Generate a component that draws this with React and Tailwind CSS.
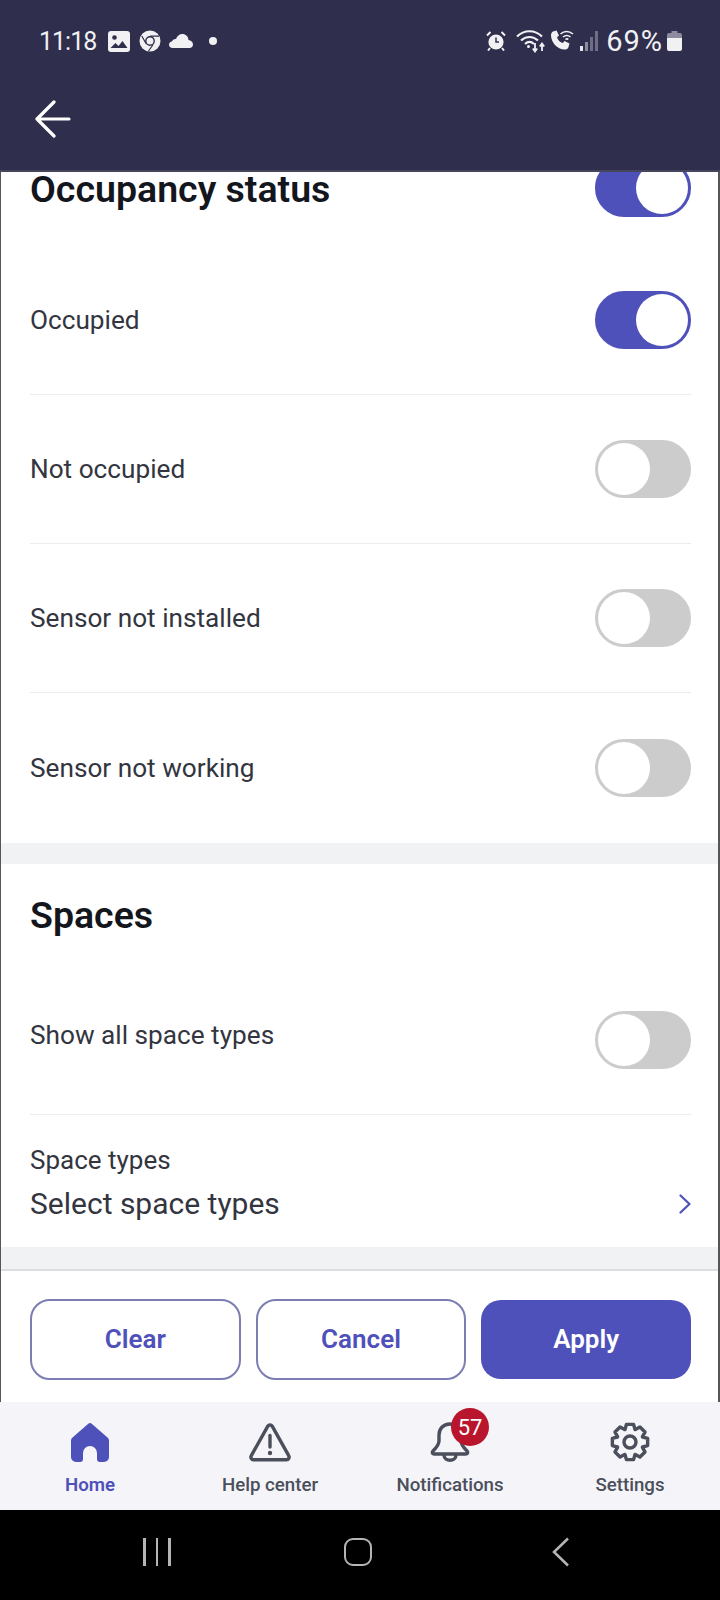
import { useMemo } from "react";

const font = { fontFamily: "Roboto, sans-serif" };

function Toggle({ on }) {
  return (
    <div
      className={`flex h-[58px] w-[96px] shrink-0 items-center rounded-full border-[3px] ${
        on
          ? "justify-end border-[#4f51bb] bg-[#4f51bb]"
          : "justify-start border-[#cccccc] bg-[#cccccc]"
      }`}
    >
      <div className="h-[52px] w-[52px] rounded-full bg-white"></div>
    </div>
  );
}

function ToggleRow({ label, on, last }) {
  return (
    <div
      className={`flex items-center justify-between ${
        last ? "h-[150px]" : "h-[149px] border-b border-[#ececee]"
      }`}
    >
      <span className="text-[26.2px] leading-none text-[#33353f]">{label}</span>
      <Toggle on={on} />
    </div>
  );
}

function StatusBar() {
  return (
    <div className="flex h-[82px] items-center pl-[39px] pr-[38px] text-[#f1f1f4]">
      <span className="text-[25px] leading-none tracking-[-1px]">11:18</span>
      <svg width="22" height="21" viewBox="0 0 22 21" className="ml-[12px]">
        <rect width="22" height="21" rx="3" fill="#f1f1f4" />
        <circle cx="6.500" cy="6.500" r="2.300" fill="#2f2e4c" />
        <path d="M2.500 17l5-5 3 3 4-5 5 7z" fill="#2f2e4c" />
      </svg>
      <svg width="22" height="22" viewBox="0 0 22 22" className="ml-[9px]">
        <circle cx="11" cy="11" r="10.500" fill="#f1f1f4" />
        <circle cx="11" cy="11" r="4.200" fill="#f1f1f4" stroke="#2f2e4c" strokeWidth="1.400" />
        <path d="M11 6.200h9M7 13.500L2.800 6M13.800 15L9.500 21" stroke="#2f2e4c" strokeWidth="1.200" />
      </svg>
      <svg width="24" height="14" viewBox="0 0 24 14" className="ml-[8px]">
        <path
          d="M3.500 14C1.500 14 0 12.600 0 10.800c0-1.700 1.300-3 3-3.200C3.600 5.600 5.300 4.600 7 5c1-3 3.300-5 6.300-5 3.400 0 6 2.500 6.200 6 2.500.3 4.500 2.200 4.500 4.500 0 2-1.500 3.500-3.500 3.500z"
          fill="#f1f1f4"
        />
      </svg>
      <div className="ml-[16px] h-[8px] w-[8px] rounded-full bg-[#f1f1f4]"></div>
      <div className="flex-1"></div>
      <svg width="20" height="20" viewBox="0 0 20 20">
        <circle cx="10" cy="11" r="7.600" fill="#f1f1f4" />
        <path d="M10 6.500V11h3" stroke="#2f2e4c" strokeWidth="1.500" fill="none" />
        <path d="M1 4.500L4.500 1M19 4.500L15.500 1M4 17l-2 2.500M16 17l2 2.500" stroke="#f1f1f4" strokeWidth="2" />
      </svg>
      <svg width="30" height="24" viewBox="0 0 30 24" className="ml-[10px]">
        <path d="M1 7.500C8 .5 19 .5 26 7.500" stroke="#f1f1f4" strokeWidth="2.200" fill="none" />
        <path d="M5 11.500C10 6.800 17 6.800 22 11.500" stroke="#f1f1f4" strokeWidth="2.200" fill="none" />
        <path d="M9 15c3-2.700 6-2.700 9 0" stroke="#f1f1f4" strokeWidth="2.200" fill="none" />
        <circle cx="12.500" cy="17.500" r="1.500" fill="#f1f1f4" />
        <path d="M19 14v8M16.800 19.500l2.200 3 2.200-3M26 22v-7M23.800 17.500l2.200-3 2.200 3" stroke="#f1f1f4" strokeWidth="1.800" fill="none" />
      </svg>
      <svg width="23" height="22" viewBox="0 0 23 22" className="ml-[5px]">
        <path
          d="M2 1.500l3.500-1 2.500 5-2 1.700c.8 2.800 3 5 5.800 5.800l1.700-2 5 2.500-1 3.500c-.4 1.500-1.500 2.500-3 2.500C6.500 20 0 12.500 0 5c0-1.500.8-3 2-3.500z"
          fill="#f1f1f4"
        />
        <path d="M9.500 4C13 .8 18 .8 22 4M12 7c2.400-2 5-2 7.500 0M14.500 9.500c1-.8 1.800-.8 2.800 0" stroke="#f1f1f4" strokeWidth="1.600" fill="none" />
      </svg>
      <div className="ml-[6px] flex h-[20px] items-end gap-[2px]">
        <div className="h-[5px] w-[3px] bg-[#e6e6ea]"></div>
        <div className="h-[9px] w-[3px] bg-[#8d8c9e]"></div>
        <div className="h-[14px] w-[3px] bg-[#6f6e84]"></div>
        <div className="h-[20px] w-[3px] bg-[#6f6e84]"></div>
      </div>
      <span className="ml-[8px] text-[29px] leading-none tracking-[1px]">69%</span>
      <svg width="15" height="20" viewBox="0 0 15 20" className="ml-[4px]">
        <path d="M4.500 0h6v2H13a2 2 0 012 2v3H0V4a2 2 0 012-2h2.500z" fill="#8d8c9e" />
        <path d="M0 7h15v11a2 2 0 01-2 2H2a2 2 0 01-2-2z" fill="#f1f1f4" />
      </svg>
    </div>
  );
}

function HomeIcon() {
  return (
    <svg width="38" height="39" viewBox="0 0 38 39">
      <path
        d="M17 1a3 3 0 014 0l15.500 13.500A4 4 0 0138 17.500V34a5 5 0 01-5 5h-4a3 3 0 01-3-3v-6a7 7 0 00-14 0v6a3 3 0 01-3 3H5a5 5 0 01-5-5V17.500a4 4 0 011.500-3z"
        fill="#4f51bb"
      />
    </svg>
  );
}

function AlertIcon() {
  return (
    <svg width="42" height="39" viewBox="0 0 42 39">
      <path
        d="M18.800 3.200a2.600 2.600 0 014.400 0l16.500 29.500a2.600 2.600 0 01-2.200 4H4.500a2.600 2.600 0 01-2.200-4z"
        fill="none"
        stroke="#4b4e5b"
        strokeWidth="3.400"
        strokeLinejoin="round"
      />
      <path d="M21 12.500v11.500" stroke="#4b4e5b" strokeWidth="3.400" strokeLinecap="round" />
      <circle cx="21" cy="30" r="2.200" fill="#4b4e5b" />
    </svg>
  );
}

function BellIcon() {
  return (
    <svg width="40" height="40" viewBox="0 0 40 40">
      <path
        d="M20 2c-7 0-11 5-11 11v6c0 4-3 7-6 10-1 1-1 3 1 3h32c2 0 2-2 1-3-3-3-6-6-6-10v-6c0-6-4-11-11-11z"
        fill="none"
        stroke="#4b4e5b"
        strokeWidth="3.400"
        strokeLinejoin="round"
      />
      <path d="M14 33c0 7 12 7 12 0" fill="none" stroke="#4b4e5b" strokeWidth="3.400" />
    </svg>
  );
}

function GearIcon() {
  // eight chunky teeth, same shape as the reference cog
  const d = useMemo(() => {
    const pts = [];
    for (let i = 0; i < 8; i++) {
      const a = (i * Math.PI) / 4 - Math.PI / 2;
      const p = (r, off) =>
        [(20 + r * Math.cos(a + off)).toFixed(2), (20 + r * Math.sin(a + off)).toFixed(2)].join(" ");
      pts.push(p(13.5, -0.38), p(18, -0.2), p(18, 0.2), p(13.5, 0.38));
    }
    return "M" + pts.join("L") + "z";
  }, []);
  return (
    <svg width="40" height="40" viewBox="0 0 40 40">
      <path d={d} fill="none" stroke="#4b4e5b" strokeWidth="3.400" strokeLinejoin="round" />
      <circle cx="20" cy="20" r="6" fill="none" stroke="#4b4e5b" strokeWidth="3.400" />
    </svg>
  );
}

function NavItem({ label, active, children }) {
  return (
    <div className="flex flex-col items-center">
      <div className="flex h-[40px] items-center justify-center">{children}</div>
      <span
        className={`mt-[11px] text-[18.700px] leading-[24px] ${
          active ? "font-semibold text-[#4f51bb]" : "font-medium text-[#4b4e5b]"
        }`}
      >
        {label}
      </span>
    </div>
  );
}

export default function App() {
  return (
    <div className="flex h-[1600px] w-[720px] flex-col overflow-hidden bg-white" style={font}>
      <header className="h-[172px] shrink-0 border-b-2 border-[#45455c] bg-[#2f2e4c]">
        <StatusBar />
        <svg width="36" height="38" viewBox="0 0 36 38" className="ml-[35px] mt-[18px]">
          <path
            d="M34 19H2M19 2L2 19l17 17"
            fill="none"
            stroke="#ffffff"
            strokeWidth="3.200"
            strokeLinecap="round"
            strokeLinejoin="round"
          />
        </svg>
      </header>

      <main className="h-[1230px] shrink-0 overflow-hidden border-l border-r-2 border-[#55555a] bg-white">
        <div className="-mt-[13px]">
          <section className="pl-[29px] pr-[27px]">
            <div className="flex h-[58px] items-center justify-between">
              <h2 className="mt-[4px] text-[37.500px] font-semibold leading-none text-[#14161d]">
                Occupancy status
              </h2>
              <Toggle on />
            </div>
            <div className="mt-[29px]">
              <ToggleRow label="Occupied" on />
              <ToggleRow label="Not occupied" />
              <ToggleRow label="Sensor not installed" />
              <ToggleRow label="Sensor not working" last />
            </div>
          </section>
          <div className="h-[21px] bg-[#f1f2f4]"></div>
          <section className="pl-[29px] pr-[27px]">
            <h2 className="pt-[30px] text-[37.500px] font-semibold leading-[42px] text-[#14161d]">
              Spaces
            </h2>
            <div className="flex h-[179px] items-center justify-between border-b border-[#ececee] pt-[29px]">
              <span className="mb-[8px] text-[26.200px] leading-none text-[#33353f]">
                Show all space types
              </span>
              <Toggle />
            </div>
            <div className="h-[132px] pt-[30px]">
              <div className="text-[26px] leading-[30px] text-[#33353f]">Space types</div>
              <div className="mt-[14px] flex items-center justify-between">
                <span className="text-[30px] leading-[30px] text-[#33353f]">Select space types</span>
                <svg width="12" height="20" viewBox="0 0 12 20">
                  <path d="M1.500 1.500L10.500 10l-9 8.500" fill="none" stroke="#4f51bb" strokeWidth="2.200" strokeLinecap="round" strokeLinejoin="round" />
                </svg>
              </div>
            </div>
          </section>
          <div className="h-[24px] border-b-2 border-[#dcdde0] bg-[#f1f2f4]"></div>
          <div className="flex gap-[15px] pl-[29px] pr-[27px] pt-[28px]">
            <button className="flex h-[81px] w-[211px] items-center justify-center rounded-[20px] border-2 border-[#7c7db3] text-[26px] font-semibold text-[#4f51bb]">
              Clear
            </button>
            <button className="flex h-[81px] w-[211px] items-center justify-center rounded-[20px] border-2 border-[#7c7db3] text-[26px] font-semibold text-[#4f51bb]">
              Cancel
            </button>
            <button className="mt-[1px] flex h-[79px] w-[210px] items-center justify-center rounded-[20px] bg-[#4f51bb] text-[26px] font-semibold text-white">
              Apply
            </button>
          </div>
        </div>
      </main>

      <nav className="grid h-[108px] shrink-0 grid-cols-4 bg-[#f5f5f9] pt-[20px]">
        <NavItem label="Home" active>
          <HomeIcon />
        </NavItem>
        <NavItem label="Help center">
          <AlertIcon />
        </NavItem>
        <NavItem label="Notifications">
          <div className="relative">
            <BellIcon />
            <div className="absolute -right-[19px] -top-[14px] flex h-[38px] w-[38px] items-center justify-center rounded-full bg-[#b9152c] text-[22px] text-white">
              57
            </div>
          </div>
        </NavItem>
        <NavItem label="Settings">
          <GearIcon />
        </NavItem>
      </nav>

      <div className="flex flex-1 items-center bg-black pb-[6px] pl-[143px]">
        <div className="flex gap-[10px]">
          <div className="h-[28px] w-[2.500px] bg-[#b5b5b5]"></div>
          <div className="h-[28px] w-[2.500px] bg-[#b5b5b5]"></div>
          <div className="h-[28px] w-[2.500px] bg-[#b5b5b5]"></div>
        </div>
        <div className="ml-[173px] h-[28px] w-[28px] rounded-[9px] border-[2.500px] border-[#b5b5b5]"></div>
        <svg width="18" height="30" viewBox="0 0 18 30" className="ml-[180px]">
          <path d="M16 1.500L2 15l14 13.500" fill="none" stroke="#b5b5b5" strokeWidth="2.500" />
        </svg>
      </div>
    </div>
  );
}
